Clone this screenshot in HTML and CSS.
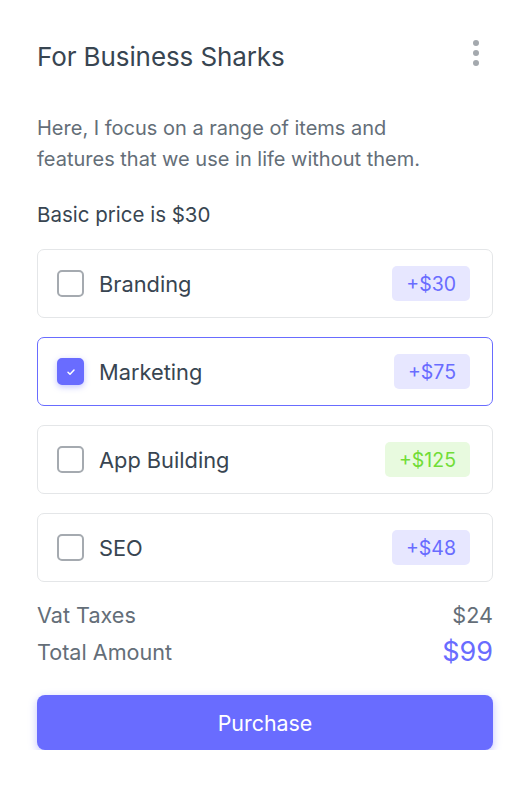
FILE: index.html
```html
<!DOCTYPE html>
<html>
<head>
<meta charset="utf-8">
<link rel="stylesheet" href="styles.css">
</head>
<body>
<div class="card">
  <div class="header">
    <h1 class="title">For Business Sharks</h1>
    <span class="kebab"><i></i><i></i><i></i></span>
  </div>
  <p class="desc">Here, I focus on a range of items and features that we use in life without them.</p>
  <p class="basic">Basic price is $30</p>
  <div class="options">
    <label class="option">
      <span class="check"></span>
      <span class="name">Branding</span>
      <span class="badge">+$30</span>
    </label>
    <label class="option selected">
      <span class="check on"><svg viewBox="0 0 12 12" width="12" height="12"><path d="M3 6.2l2 2 4-4.2" fill="none" stroke="#fff" stroke-width="1.5" stroke-linecap="round" stroke-linejoin="round"/></svg></span>
      <span class="name">Marketing</span>
      <span class="badge">+$75</span>
    </label>
    <label class="option">
      <span class="check"></span>
      <span class="name">App Building</span>
      <span class="badge green">+$125</span>
    </label>
    <label class="option">
      <span class="check"></span>
      <span class="name">SEO</span>
      <span class="badge">+$48</span>
    </label>
  </div>
  <div class="summary">
    <div class="row"><span>Vat Taxes</span><span class="vat">$24</span></div>
    <div class="row"><span>Total Amount</span><span class="total">$99</span></div>
  </div>
  <button class="btn">Purchase</button>
</div>
</body>
</html>
```
FILE: styles.css
```css
* { box-sizing: border-box; }
html, body { margin: 0; background: #fff; }
body { font-family: "Inter", "Open Sans", sans-serif; color: #384551; }
.card { padding: 36px 35px 0 37px; }
.header { display: flex; justify-content: space-between; align-items: flex-start; }
.title { margin: 6px 0 0; font-size: 26px; font-weight: 400; line-height: 30px; color: #384551; letter-spacing: -0.1px; }
.kebab { display: flex; flex-direction: column; gap: 4px; padding: 4px 14px 0 0; }
.kebab i { width: 6px; height: 6px; border-radius: 50%; background: #a4a9ae; display: block; }
.desc { margin: 41px 0 0; font-size: 20px; line-height: 31px; color: #646e78; max-width: 430px; }
.basic { margin: 28px 0 0; font-size: 20.5px; line-height: 24px; color: #384551; }
.options { margin-top: 22px; display: flex; flex-direction: column; gap: 19px; }
.option { display: flex; align-items: center; height: 69px; border: 1px solid #e4e6e8; border-radius: 7px; padding: 0 22px 0 19px; }
.option.selected { border: 1.5px solid #696cff; }
.check { width: 27px; height: 27px; border: 2.5px solid #a5aab0; border-radius: 5px; display: flex; align-items: center; justify-content: center; flex: none; }
.check.on { background: #696cff; border-color: #696cff; box-shadow: 0 2px 6px rgba(105,108,255,0.4); }
.name { margin-left: 15px; font-size: 21.8px; color: #384551; flex: 1; }
.badge { background: #e7e7ff; color: #696cff; font-size: 19.5px; height: 35px; padding: 0 14px; border-radius: 5px; display: flex; align-items: center; }
.badge.green { background: #e8fadf; color: #71dd37; }
.summary { margin-top: 20px; display: flex; flex-direction: column; gap: 11px; }
.row { display: flex; justify-content: space-between; align-items: center; font-size: 21.6px; color: #646e78; line-height: 26px; }
.vat { color: #646e78; }
.total { color: #696cff; font-size: 27px; }
.btn { margin-top: 30px; width: 100%; height: 55px; border: 0; border-radius: 8px; background: #696cff; color: #fff; font-family: inherit; font-size: 21.4px; box-shadow: 0 3px 8px rgba(105,108,255,0.4); }
```
